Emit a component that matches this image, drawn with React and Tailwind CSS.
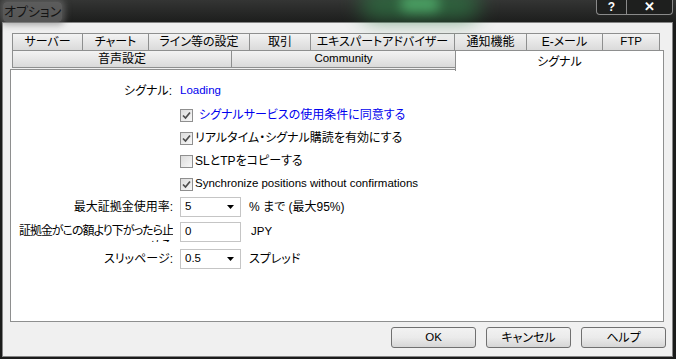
import React from "react";

const font = { fontFamily: '"Liberation Sans", "Noto Sans CJK JP", sans-serif' };
const jp = "text-[12px] [font-feature-settings:'palt']";

function Tab({ label, w, latin }) {
  return (
    <div
      className="h-[18px] flex items-center justify-center border border-[#8e8f8f] text-black -ml-px first:ml-0 whitespace-nowrap bg-gradient-to-b from-[#f3f3f3] to-[#dadada]"
      style={{ width: w }}
    >
      <span className={latin ? "" : jp}>{label}</span>
    </div>
  );
}

function Check({ checked }) {
  return (
    <div className="w-[13px] h-[13px] border border-[#8f8f8f] bg-gradient-to-br from-[#dcdcdc] to-[#f8f8f8] flex items-center justify-center shrink-0">
      {checked && (
        <svg width="9" height="9" viewBox="0 0 9 9">
          <path d="M1 4.5 L3.5 7 L8 1.5" fill="none" stroke="#4d4d4d" strokeWidth="1.7" />
        </svg>
      )}
    </div>
  );
}

function Select({ value }) {
  return (
    <div className="w-[61px] h-[20px] border border-[#c5c5c5] bg-white flex items-center pl-[4px] pr-[6px] justify-between">
      <span>{value}</span>
      <svg width="7" height="4" viewBox="0 0 7 4">
        <path d="M0 0 H7 L3.5 4 Z" fill="#000" />
      </svg>
    </div>
  );
}

export default function App() {
  const row1 = [
    ["サーバー", 71],
    ["チャート", 67],
    ["ライン等の設定", 102],
    ["取引", 62],
    ["エキスパートアドバイザー", 145],
    ["通知機能", 73],
    ["E-メール", 77],
    ["FTP", 58, true],
  ];

  return (
    <div className="w-[676px] h-[359px] bg-[#1b1c1b] flex flex-col overflow-hidden text-[11.5px]" style={font}>
      {/* title bar */}
      <div className="relative h-[22px] shrink-0 bg-gradient-to-b from-[#343534] to-[#1d1e1d] flex items-start">
        <div className="absolute left-[360px] top-[-10px] w-[120px] h-[30px] rounded-full bg-[#2f7a45] blur-[10px] opacity-70" />
        <div className="absolute left-[400px] top-[-4px] w-[40px] h-[16px] rounded-full bg-[#5fcf7f] blur-[6px] opacity-60" />
        <span className="relative ml-[3px] mt-[2px] text-[13px] [font-feature-settings:'palt'] text-[#141414] px-[1px] rounded-[4px] bg-[#6d6e6d]/70 shadow-[0_0_6px_3px_rgba(120,120,120,0.6)]">
          オプション
        </span>
        <div className="relative ml-auto mr-[3px] flex h-[15px] border border-t-0 border-[#8a8a8a] rounded-b-[4px] bg-[#1e1f1e]">
          <div className="w-[30px] flex items-center justify-center text-white text-[12px] font-bold border-r border-[#8a8a8a]">?</div>
          <div className="w-[45px] flex items-center justify-center text-white text-[13px] font-bold">✕</div>
        </div>
      </div>

      {/* dialog body */}
      <div className="ml-[2px] mr-[3px] h-[335px] border border-[#858585] bg-[#f0f0f0] flex flex-col pl-[7px] pt-[10px] text-black">
        <div className="ml-[2px] flex">
          {row1.map(([l, w, latin]) => (
            <Tab key={l} label={l} w={w} latin={latin} />
          ))}
        </div>
        <div className="ml-[2px] flex -mt-px relative z-10">
          <Tab label="音声設定" w={220} />
          <Tab label="Community" w={225} latin />
          <div className="w-[209px] h-[21px] -ml-px bg-white border border-b-0 border-[#8e8f8f] flex justify-center pt-[2px]">
            <span className={jp}>シグナル</span>
          </div>
        </div>

        {/* panel */}
        <div className="w-[654px] h-[253px] -mt-[2px] border border-[#8e8f8f] bg-white flex flex-col">
          <div className="flex items-center mt-[13px] h-[16px]">
            <span className={"w-[162px] text-right pr-[1px] " + jp}>シグナル:</span>
            <span className="ml-[7px] text-[#0000ee]">Loading</span>
          </div>
          <div className="ml-[169px] mt-[9px] flex flex-col gap-[9px]">
            <div className="flex items-center h-[14px] gap-[6px]">
              <Check checked />
              <span className={"text-[#0000ee] " + jp}>シグナルサービスの使用条件に同意する</span>
            </div>
            <div className="flex items-center h-[14px] gap-[2px]">
              <Check checked />
              <span className={jp}>リアルタイム・シグナル購読を有効にする</span>
            </div>
            <div className="flex items-center h-[14px] gap-[2px]">
              <Check />
              <span className={jp}>SLとTPをコピーする</span>
            </div>
            <div className="flex items-center h-[14px] gap-[2px]">
              <Check checked />
              <span>Synchronize positions without confirmations</span>
            </div>
          </div>

          <div className="mt-[6px] flex items-center h-[20px]">
            <span className={"w-[162px] text-right " + jp}>最大証拠金使用率:</span>
            <div className="ml-[7px]">
              <Select value="5" />
            </div>
            <span className={"ml-[8px] " + jp}>% まで (最大95%)</span>
          </div>
          <div className="mt-[5px] flex items-center h-[20px]">
            <div className={"w-[172px] -ml-[10px] h-[20px] overflow-hidden whitespace-nowrap text-right leading-[15px] pt-[2px] tracking-[-1px] " + jp}>
              証拠金がこの額より下がったら止
              <br />
              める:
            </div>
            <div className="ml-[7px] w-[61px] h-[20px] border border-[#c5c5c5] bg-white flex items-center pl-[4px]">0</div>
            <span className="ml-[10px]">JPY</span>
          </div>
          <div className="mt-[7px] flex items-center h-[20px]">
            <span className={"w-[162px] text-right " + jp}>スリッページ:</span>
            <div className="ml-[7px]">
              <Select value="0.5" />
            </div>
            <span className={"ml-[8px] " + jp}>スプレッド</span>
          </div>
        </div>

        {/* buttons */}
        <div className="flex justify-end gap-[10px] mt-[5px] mr-[6px]">
          {["OK", "キャンセル", "ヘルプ"].map((b) => (
            <div
              key={b}
              className="w-[85px] h-[21px] border border-[#707070] rounded-[3px] bg-gradient-to-b from-[#f2f2f2] via-[#ebebeb] to-[#d6d6d6] flex items-center justify-center"
            >
              <span className={b === "OK" ? "" : jp}>{b}</span>
            </div>
          ))}
        </div>
      </div>
    </div>
  );
}
